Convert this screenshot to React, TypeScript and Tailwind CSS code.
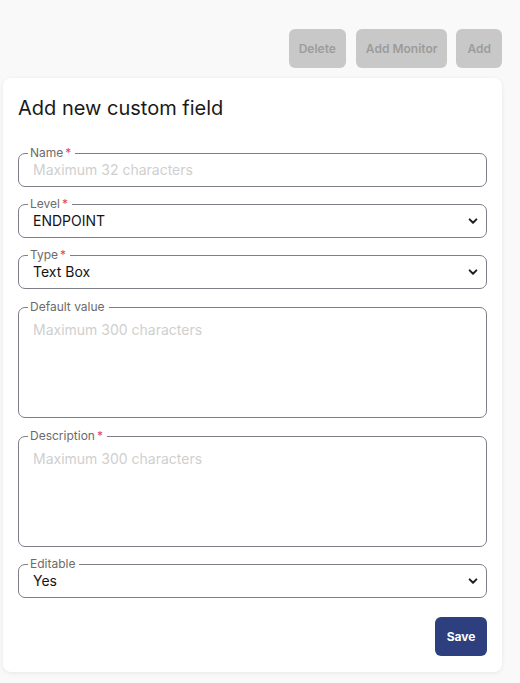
import { ReactNode } from "react";

function Chevron() {
  return (
    <svg
      className="pointer-events-none absolute right-[-7px] top-1/2 h-[12px] w-[12px] -translate-y-1/2"
      viewBox="0 0 16 16"
      fill="none"
      stroke="#1f1f24"
      strokeWidth="2.6"
      strokeLinecap="round"
      strokeLinejoin="round"
    >
      <path d="M3.5 5.8l4.5 4.5 4.5-4.5" />
    </svg>
  );
}

function Field({
  label,
  required,
  className = "",
  children,
}: {
  label: string;
  required?: boolean;
  className?: string;
  children: ReactNode;
}) {
  return (
    <fieldset className={`relative rounded-[7px] border border-[#7e7e88] px-[14px] pb-[6px] ${className}`}>
      <legend className="-ml-[5px] pl-[2px] pr-[4px] text-[12px] leading-[14px] text-[#6b6b6b]">
        {label}
        {required && <span className="ml-[2px] text-[#e0455b]">*</span>}
      </legend>
      {children}
    </fieldset>
  );
}

function SelectField({ label, required, value }: { label: string; required?: boolean; value: string }) {
  return (
    <Field label={label} required={required}>
      <div className="relative">
        <select
          defaultValue={value}
          className="block h-[20px] w-full appearance-none bg-transparent p-0 pr-6 text-[14px] leading-[20px] text-[#141414] outline-none"
        >
          <option>{value}</option>
        </select>
        <Chevron />
      </div>
    </Field>
  );
}

export default function App() {
  return (
    <div
      className="min-h-[683px] bg-[#f9f9f9] pl-[3px] pr-[18px] pt-[29px]"
      style={{ fontFamily: "Inter, 'Noto Sans', sans-serif" }}
    >
      <div className="flex justify-end gap-[10px]">
        <button className="h-[39px] rounded-[6px] bg-[#c8c8c8] px-[10px] text-[12px] font-semibold text-[#9c9c9c]">
          Delete
        </button>
        <button className="h-[39px] rounded-[6px] bg-[#c8c8c8] px-[10px] text-[12px] font-semibold text-[#9c9c9c]">
          Add Monitor
        </button>
        <button className="-ml-[1px] h-[39px] rounded-[6px] bg-[#c8c8c8] px-[11px] text-[12px] font-semibold text-[#9c9c9c]">
          Add
        </button>
      </div>

      <div className="mt-[10px] rounded-[8px] bg-white px-[15px] pb-[16px] pt-[16px] shadow-[0_1px_4px_rgba(0,0,0,0.08)]">
        <h1 className="text-[20px] leading-[28px] text-[#1a1a1a]">Add new custom field</h1>

        <div className="mt-[24px] flex flex-col gap-[10px]">
          <Field label="Name" required>
            <input
              placeholder="Maximum 32 characters"
              className="block h-[20px] w-full bg-transparent text-[14px] leading-[20px] text-[#141414] outline-none placeholder:text-[#cfcfcf]"
            />
          </Field>

          <SelectField label="Level" required value="ENDPOINT" />
          <SelectField label="Type" required value="Text Box" />

          <Field label="Default value" className="mt-[1px]">
            <textarea
              placeholder="Maximum 300 characters"
              className="mt-[6px] block h-[91px] w-full resize-none bg-transparent text-[14px] leading-[20px] text-[#141414] outline-none placeholder:text-[#cfcfcf]"
            />
          </Field>

          <Field label="Description" required className="mt-[1px]">
            <textarea
              placeholder="Maximum 300 characters"
              className="mt-[6px] block h-[91px] w-full resize-none bg-transparent text-[14px] leading-[20px] text-[#141414] outline-none placeholder:text-[#cfcfcf]"
            />
          </Field>

          <SelectField label="Editable" value="Yes" />
        </div>

        <div className="mt-[19px] flex justify-end">
          <button className="h-[39px] w-[52px] rounded-[6px] bg-[#2e3f7f] text-[12px] font-bold text-white">
            Save
          </button>
        </div>
      </div>
    </div>
  );
}
